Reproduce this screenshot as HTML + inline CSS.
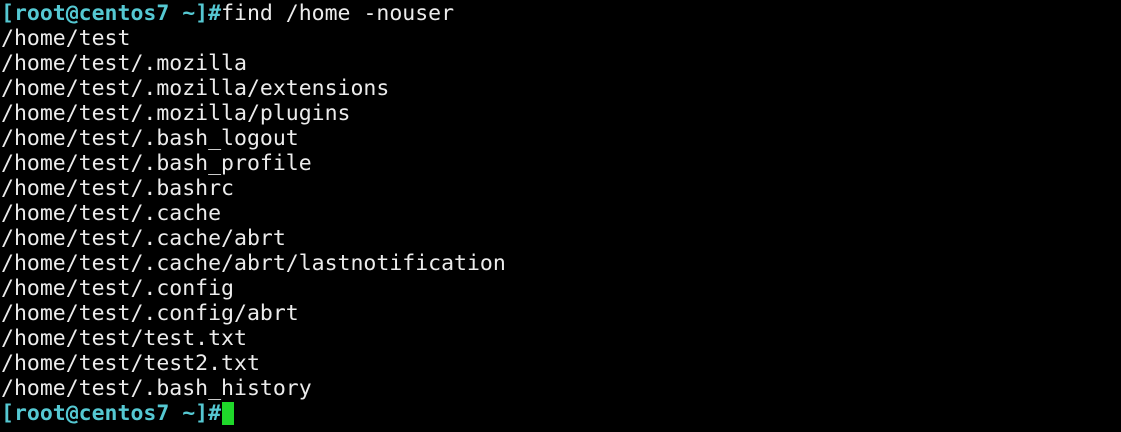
<html><head><style>
body{margin:0;background:#000;width:1121px;height:432px;overflow:hidden}
pre{margin:0;position:absolute;left:1px;top:1px;font-family:"DejaVu Sans Mono","Liberation Mono",monospace;font-size:21.5px;line-height:25px;color:#ececec}
.p{color:#55c8d2;font-weight:bold}
.c{display:inline-block;width:12px;height:23px;background:#1fd82a;vertical-align:-5px;margin-left:1px}
</style></head><body><pre><span class="p">[root@centos7 ~]#</span>find /home -nouser
/home/test
/home/test/.mozilla
/home/test/.mozilla/extensions
/home/test/.mozilla/plugins
/home/test/.bash_logout
/home/test/.bash_profile
/home/test/.bashrc
/home/test/.cache
/home/test/.cache/abrt
/home/test/.cache/abrt/lastnotification
/home/test/.config
/home/test/.config/abrt
/home/test/test.txt
/home/test/test2.txt
/home/test/.bash_history
<span class="p">[root@centos7 ~]#</span><span class="c"></span></pre></body></html>
